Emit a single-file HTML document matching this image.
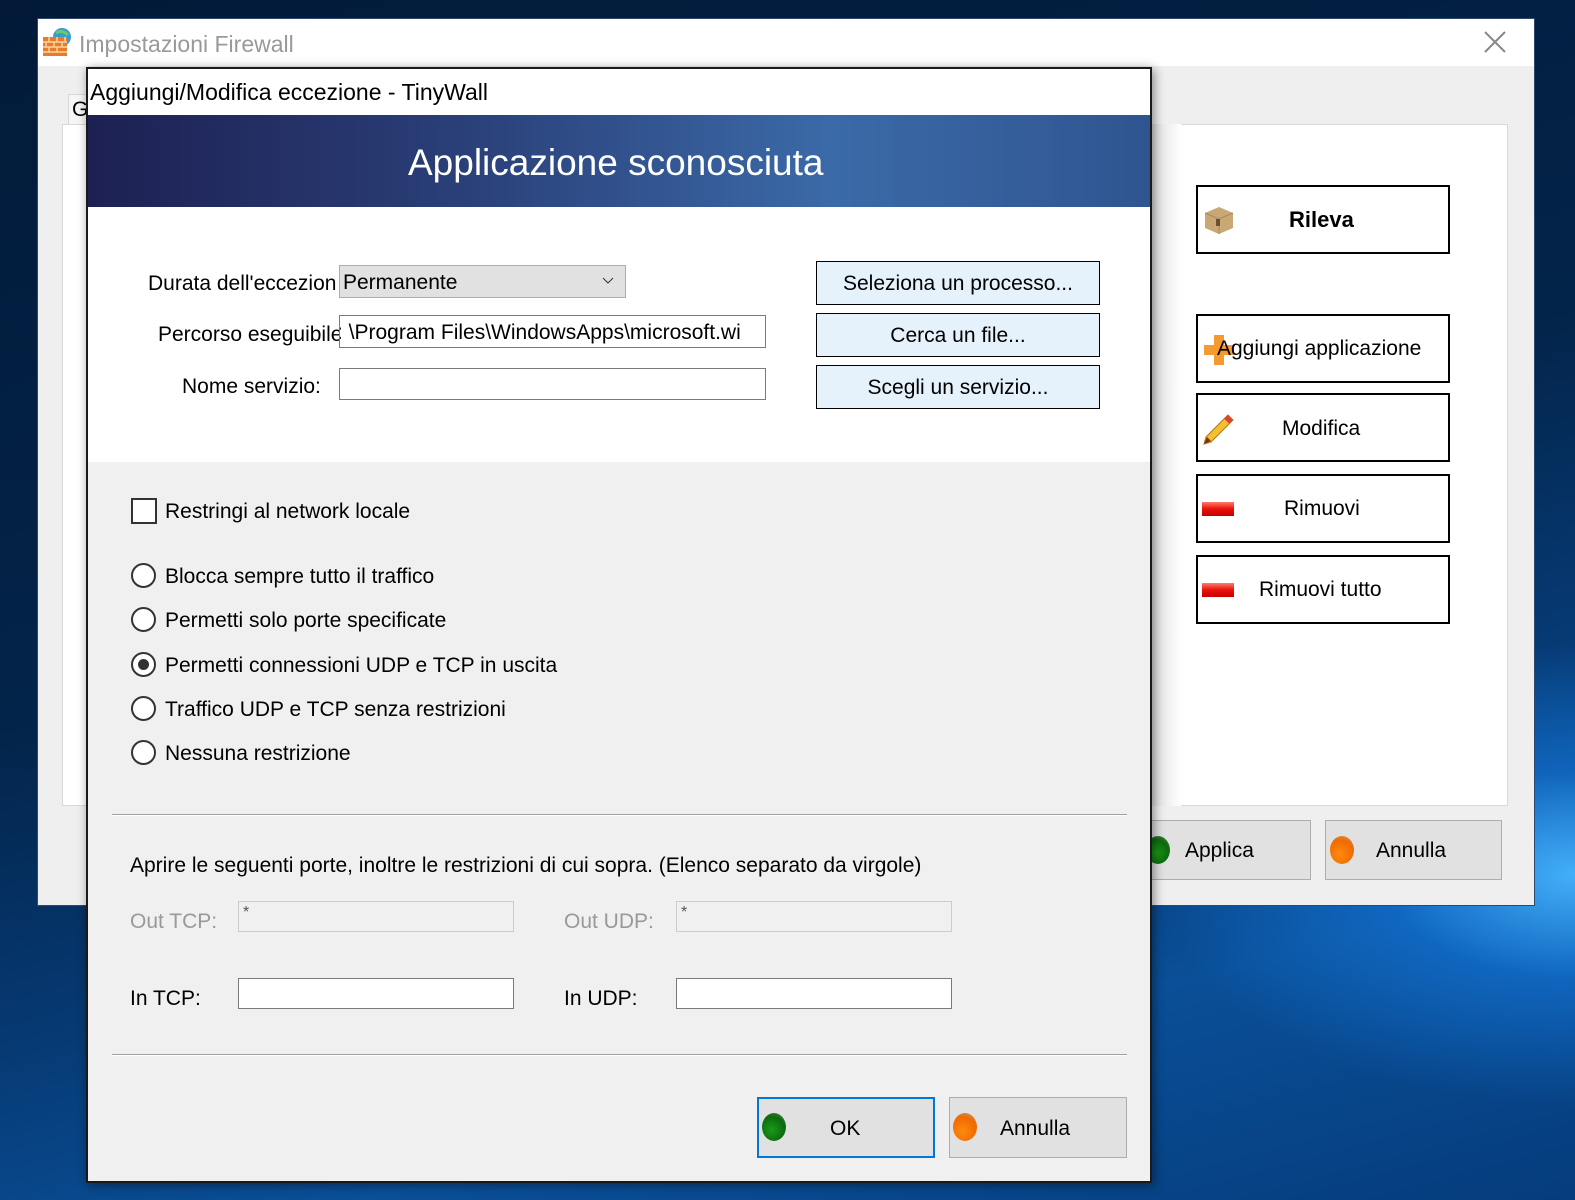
<!DOCTYPE html>
<html><head><meta charset="utf-8"><style>
*{box-sizing:border-box;margin:0;padding:0}
body{width:1575px;height:1200px;overflow:hidden;position:relative;font-family:"Liberation Sans",Arial,sans-serif;
background:linear-gradient(165deg,#021a38 0%,#03244a 45%,#063a74 65%,#0a4f98 80%,#053c7c 100%);}
.abs{position:absolute}
.glow{position:absolute;left:1000px;top:600px;width:575px;height:550px;background:radial-gradient(ellipse 420px 230px at 100% 50%,rgba(70,180,255,.95),rgba(20,120,220,.6) 45%,rgba(10,80,170,0) 100%);}
.outer{left:37px;top:18px;width:1498px;height:888px;background:#efefef;border:1px solid #2b4a6e}
.otitle{left:0;top:0;width:100%;height:47px;background:#fff}
.t{position:absolute;white-space:nowrap;font-size:21px;color:#000;line-height:1}
.btnw{position:absolute;background:#fff;border:2px solid #000;}
.gbtn{position:absolute;background:#e1e1e1;border:1px solid #adadad}
.ball{position:absolute;width:24px;height:28px;border-radius:50%}
.green{background:radial-gradient(circle at 40% 60%,#1a9a1a,#0c6a0c 60%,#6a8a6a)}
.orange{background:radial-gradient(circle at 40% 65%,#ff8a10,#f06a00 60%,#c0a080)}
.red{position:absolute;width:32px;height:14px;background:linear-gradient(#ff7a6a,#e8100a 50%,#c80000)}
.dlg{left:86px;top:67px;width:1066px;height:1116px;background:#f0f0f0;border:2px solid #1a1a1a;box-shadow:2px 2px 10px rgba(0,0,0,.45)}
.inp{position:absolute;background:#fff;border:1px solid #7a7a7a}
.radio{position:absolute;width:25px;height:25px;border:2px solid #333;border-radius:50%;background:#fff}
.sep{position:absolute;left:24px;width:1015px;height:2px;border-top:1px solid #a0a0a0;border-bottom:1px solid #fff}
.pbtn{position:absolute;background:#e5f1fb;border:1px solid #000;font-size:21px;text-align:center}
</style></head><body>
<div class="glow"></div>
<div class="abs outer">
 <div class="abs otitle"></div>
 <svg class="abs" style="left:4px;top:8px" width="32" height="30" viewBox="0 0 32 30">
  <circle cx="20" cy="10" r="9" fill="#3a9ad8"/><path d="M14 6q6-4 12 2" stroke="#6c6" stroke-width="3" fill="none"/>
  <rect x="1" y="10" width="24" height="19" fill="#e87a2a"/>
  <path d="M1 15h24M1 20h24M1 25h24M7 10v5M15 10v5M23 10v5M4 15v5M12 15v5M20 15v5M7 20v5M15 20v5" stroke="#fbd4a0" stroke-width="1.5"/>
 </svg>
 <div class="t" style="left:41px;top:14px;font-size:23px;color:#999">Impostazioni Firewall</div>
 <svg class="abs" style="left:1446px;top:12px" width="22" height="22"><path d="M1 1L21 21M21 1L1 21" stroke="#888" stroke-width="2"/></svg>
 <div class="abs" style="left:30px;top:75px;width:30px;height:40px;background:#f6f6f6;border:1px solid #d8d8d8;border-bottom:none"></div>
 <div class="t" style="left:34px;top:80px">G</div>
 <div class="abs" style="left:24px;top:105px;width:1446px;height:682px;background:#fff;border:1px solid #d8d8d8"></div>
 <div class="abs" style="left:1113px;top:105px;width:30px;height:682px;background:linear-gradient(90deg,#ddd,#fff)"></div>
</div>
<!-- right buttons -->
<div class="btnw" style="left:1196px;top:185px;width:254px;height:69px"></div>
<svg class="abs" style="left:1203px;top:204px" width="32" height="32"><path d="M2 9L16 3 30 9 30 24 16 30 2 24Z" fill="#c9a874"/><path d="M2 9L16 15 30 9M16 15V30" stroke="#a88a5a" fill="none"/><rect x="13" y="15" width="4" height="7" fill="#6b5030"/></svg>
<div class="t" style="left:1289px;top:209px;font-weight:bold;font-size:22px">Rileva</div>
<div class="btnw" style="left:1196px;top:314px;width:254px;height:69px"></div>
<svg class="abs" style="left:1203px;top:334px" width="32" height="32"><path d="M11 1h10v10h10v10H21v10H11V21H1V11h10Z" fill="#f59a30"/></svg>
<div class="t" style="left:1217px;top:338px">Aggiungi applicazione</div>
<div class="btnw" style="left:1196px;top:393px;width:254px;height:69px"></div>
<svg class="abs" style="left:1202px;top:411px" width="34" height="34"><path d="M4 26L26 4 31 9 9 31 2 33Z" fill="#f5c030" stroke="#b07810"/><path d="M24 6l5 5" stroke="#e04030" stroke-width="5"/><path d="M2 33l3-7 4 4z" fill="#803010"/></svg>
<div class="t" style="left:1282px;top:418px">Modifica</div>
<div class="btnw" style="left:1196px;top:474px;width:254px;height:69px"></div>
<div class="red" style="left:1202px;top:502px"></div>
<div class="t" style="left:1284px;top:498px">Rimuovi</div>
<div class="btnw" style="left:1196px;top:555px;width:254px;height:69px"></div>
<div class="red" style="left:1202px;top:583px"></div>
<div class="t" style="left:1259px;top:579px">Rimuovi tutto</div>
<div class="gbtn" style="left:1130px;top:820px;width:181px;height:60px"></div>
<div class="ball green" style="left:1146px;top:836px"></div>
<div class="t" style="left:1185px;top:840px">Applica</div>
<div class="gbtn" style="left:1325px;top:820px;width:177px;height:60px"></div>
<div class="ball orange" style="left:1330px;top:836px"></div>
<div class="t" style="left:1376px;top:840px">Annulla</div>
<!-- dialog -->
<div class="abs dlg">
 <div class="abs" style="left:0;top:0;width:1062px;height:46px;background:#fff"></div>
 <div class="t" style="left:2px;top:12px;font-size:23px">Aggiungi/Modifica eccezione - TinyWall</div>
 <div class="abs" style="left:0;top:46px;width:1062px;height:92px;background:linear-gradient(90deg,#1d2052 0%,#2a3f78 35%,#3b6aa8 70%,#2f5590 100%)"></div>
 <div class="t" style="left:320px;top:75px;font-size:37px;color:#fff">Applicazione sconosciuta</div>
 <div class="abs" style="left:0;top:138px;width:1062px;height:255px;background:#fff"></div>
 <div class="t" style="left:60px;top:204px">Durata dell'eccezion</div>
 <div class="abs" style="left:251px;top:196px;width:287px;height:33px;background:#e1e1e1;border:1px solid #adadad"></div>
 <div class="t" style="left:255px;top:203px">Permanente</div>
 <svg class="abs" style="left:514px;top:208px" width="12" height="8"><path d="M1 1l5 5 5-5" stroke="#333" fill="none"/></svg>
 <div class="t" style="left:70px;top:255px">Percorso eseguibile:</div>
 <div class="inp" style="left:251px;top:246px;width:427px;height:33px;overflow:hidden"><div class="t" style="left:-3px;top:6px">:&nbsp;\Program Files\WindowsApps\microsoft.wi</div></div>
 <div class="t" style="left:94px;top:307px">Nome servizio:</div>
 <div class="inp" style="left:251px;top:299px;width:427px;height:32px"></div>
 <div class="pbtn" style="left:728px;top:192px;width:284px;height:44px;padding-top:10px">Seleziona un processo...</div>
 <div class="pbtn" style="left:728px;top:244px;width:284px;height:44px;padding-top:10px">Cerca un file...</div>
 <div class="pbtn" style="left:728px;top:296px;width:284px;height:44px;padding-top:10px">Scegli un servizio...</div>
 <div class="abs" style="left:43px;top:429px;width:26px;height:26px;border:2px solid #333;background:#fff"></div>
 <div class="t" style="left:77px;top:432px">Restringi al network locale</div>
 <div class="radio" style="left:43px;top:494px"></div><div class="t" style="left:77px;top:497px">Blocca sempre tutto il traffico</div>
 <div class="radio" style="left:43px;top:538px"></div><div class="t" style="left:77px;top:541px">Permetti solo porte specificate</div>
 <div class="radio" style="left:43px;top:583px"><div class="abs" style="left:5px;top:5px;width:11px;height:11px;border-radius:50%;background:#333"></div></div><div class="t" style="left:77px;top:586px">Permetti connessioni UDP e TCP in uscita</div>
 <div class="radio" style="left:43px;top:627px"></div><div class="t" style="left:77px;top:630px">Traffico UDP e TCP senza restrizioni</div>
 <div class="radio" style="left:43px;top:671px"></div><div class="t" style="left:77px;top:674px">Nessuna restrizione</div>
 <div class="sep" style="top:745px"></div>
 <div class="t" style="left:42px;top:786px">Aprire le seguenti porte, inoltre le restrizioni di cui sopra. (Elenco separato da virgole)</div>
 <div class="t" style="left:42px;top:842px;color:#999">Out TCP:</div>
 <div class="abs" style="left:150px;top:832px;width:276px;height:31px;border:1px solid #ccc;background:#f0f0f0;color:#555;font-size:16px;padding:2px 4px">*</div>
 <div class="t" style="left:476px;top:842px;color:#999">Out UDP:</div>
 <div class="abs" style="left:588px;top:832px;width:276px;height:31px;border:1px solid #ccc;background:#f0f0f0;color:#555;font-size:16px;padding:2px 4px">*</div>
 <div class="t" style="left:42px;top:919px">In TCP:</div>
 <div class="inp" style="left:150px;top:909px;width:276px;height:31px"></div>
 <div class="t" style="left:476px;top:919px">In UDP:</div>
 <div class="inp" style="left:588px;top:909px;width:276px;height:31px"></div>
 <div class="sep" style="top:985px"></div>
 <div class="gbtn" style="left:669px;top:1028px;width:178px;height:61px;border:2px solid #0078d7"></div>
 <div class="ball green" style="left:674px;top:1044px"></div>
 <div class="t" style="left:742px;top:1049px">OK</div>
 <div class="gbtn" style="left:861px;top:1028px;width:178px;height:61px"></div>
 <div class="ball orange" style="left:865px;top:1044px"></div>
 <div class="t" style="left:912px;top:1049px">Annulla</div>
</div>
</body></html>
